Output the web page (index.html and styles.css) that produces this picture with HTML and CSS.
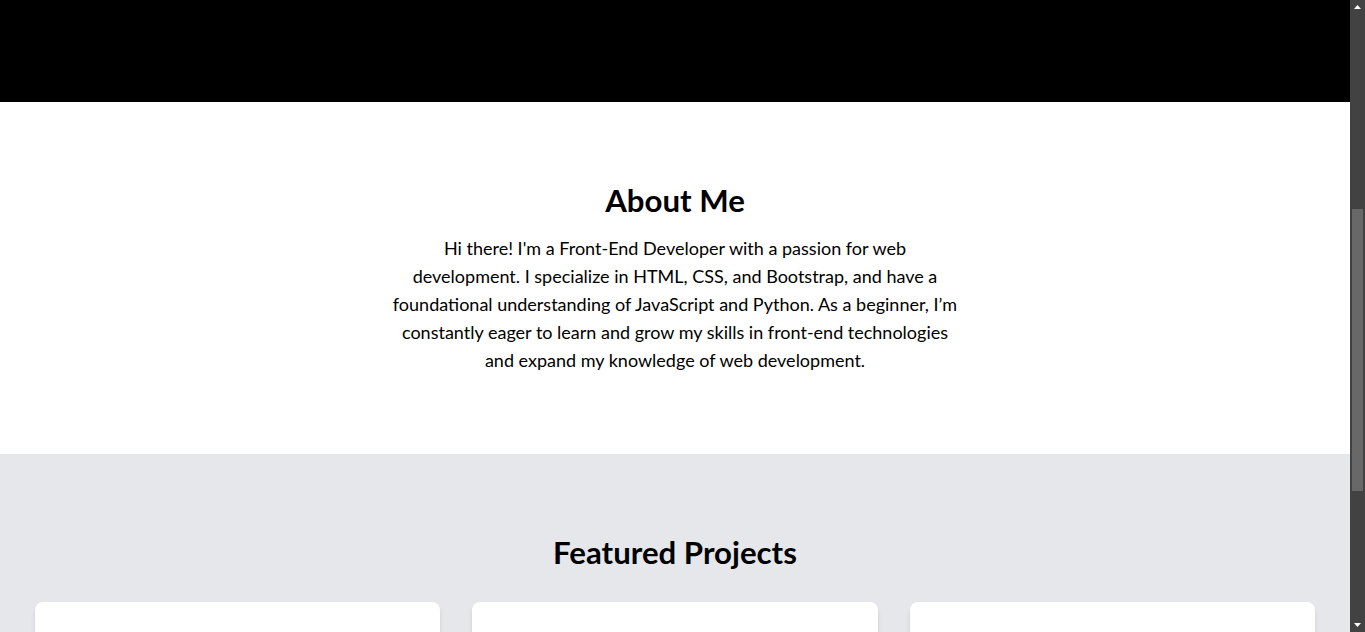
FILE: index.html
```html
<!DOCTYPE html>
<html lang="en">
<head>
<meta charset="utf-8">
<title>Portfolio</title>
<link rel="stylesheet" href="styles.css">
</head>
<body>
  <div class="page">
    <header class="hero"></header>

    <section class="about">
      <h2 class="section-title">About Me</h2>
      <p class="about-text">Hi there! I'm a Front-End Developer with a passion for web development. I specialize in HTML, CSS, and Bootstrap, and have a foundational understanding of JavaScript and Python. As a beginner, I’m constantly eager to learn and grow my skills in front-end technologies and expand my knowledge of web development.</p>
    </section>

    <section class="projects">
      <h2 class="section-title">Featured Projects</h2>
      <div class="project-grid">
        <article class="card"></article>
        <article class="card"></article>
        <article class="card"></article>
      </div>
    </section>
  </div>

  <div class="scrollbar" aria-hidden="true">
    <svg class="scroll-arrow" width="15" height="15" viewBox="0 0 15 15"><polygon points="4,9 11,9 7.5,5" fill="#ffffff"/></svg>
    <div class="scroll-track">
      <div class="scroll-thumb"></div>
    </div>
    <svg class="scroll-arrow" width="15" height="15" viewBox="0 0 15 15"><polygon points="4,6 11,6 7.5,10" fill="#ffffff"/></svg>
  </div>
</body>
</html>
```

FILE: styles.css
```css
body {
  margin: 0;
  background: #ffffff;
  color: #000000;
  font-family: "Lato", "Noto Sans", sans-serif;
  overflow: hidden;
}

.page {
  margin-right: 15px;
}

.hero {
  height: 102px;
  background: #000000;
}

.about {
  background: #ffffff;
  padding: 80px 16px;
  display: flex;
  flex-direction: column;
  align-items: center;
  text-align: center;
}

.section-title {
  margin: 0 0 16px;
  font-size: 31.2px;
  line-height: 36px;
  font-weight: 700;
  color: #000000;
  text-align: center;
}

.about-text {
  margin: 0;
  max-width: 570px;
  font-size: 18px;
  line-height: 28px;
  color: #000000;
}

.projects {
  background: #e5e7eb;
  padding: 80px 0;
}

.projects .section-title {
  margin-bottom: 32px;
}

.project-grid {
  max-width: 1280px;
  margin: 0 auto;
  display: grid;
  grid-template-columns: repeat(3, 1fr);
  gap: 32px;
}

.card {
  height: 320px;
  background: #ffffff;
  border-radius: 8px;
  box-shadow: 0 4px 6px -1px rgba(0, 0, 0, 0.1), 0 2px 4px -2px rgba(0, 0, 0, 0.1);
}

/* decorative replica of the browser's dark scrollbar, overlaid on the right edge */
.scrollbar {
  position: fixed;
  top: 0;
  right: 0;
  width: 15px;
  height: 100vh;
  background: #424242;
  display: flex;
  flex-direction: column;
}

.scroll-arrow {
  display: block;
  flex: none;
}

.scroll-track {
  flex: 1;
  padding-top: 194px;
}

.scroll-thumb {
  height: 282px;
  margin: 0 2px;
  background: #686868;
}
```
